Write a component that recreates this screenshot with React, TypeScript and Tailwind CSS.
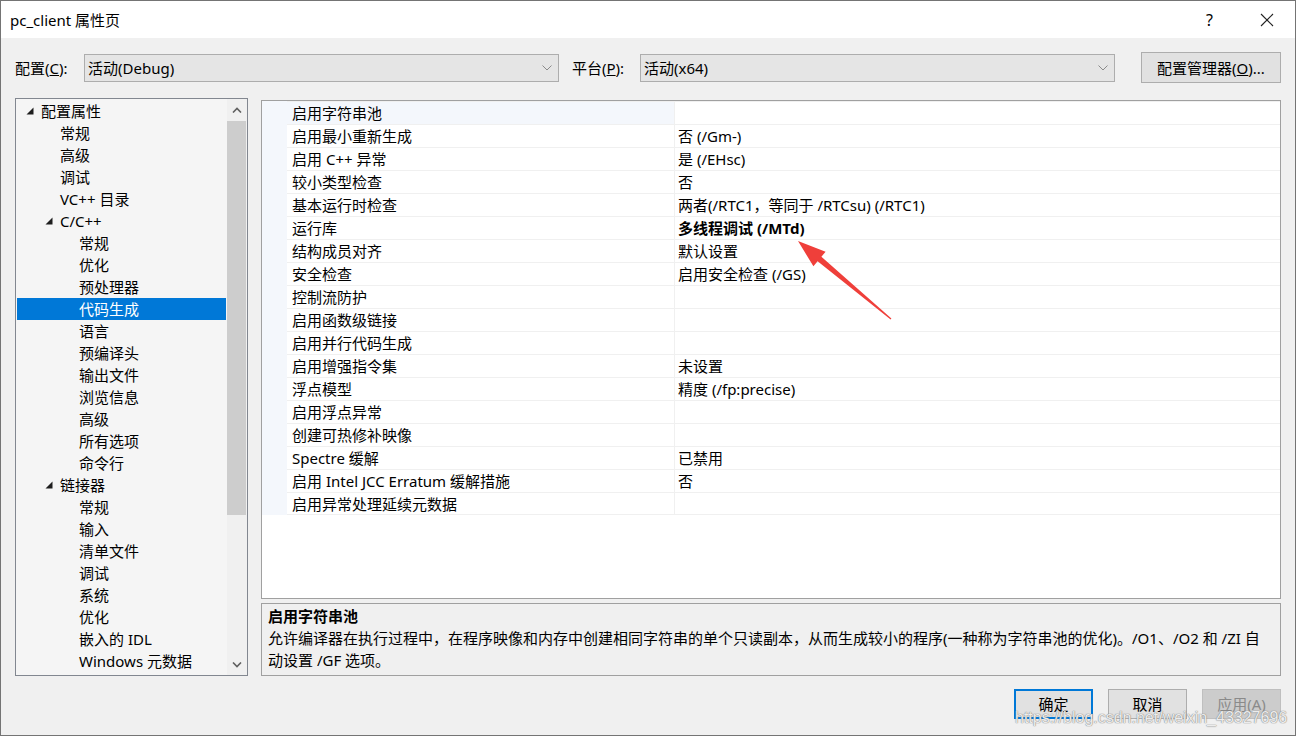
const FONT = { fontFamily: '"Noto Sans", "Noto Sans CJK SC", sans-serif' };

type TreeItem = { label: string; level: number; open?: boolean; selected?: boolean };

const tree: TreeItem[] = [
  { label: "配置属性", level: 0, open: true },
  { label: "常规", level: 1 },
  { label: "高级", level: 1 },
  { label: "调试", level: 1 },
  { label: "VC++ 目录", level: 1 },
  { label: "C/C++", level: 1, open: true },
  { label: "常规", level: 2 },
  { label: "优化", level: 2 },
  { label: "预处理器", level: 2 },
  { label: "代码生成", level: 2, selected: true },
  { label: "语言", level: 2 },
  { label: "预编译头", level: 2 },
  { label: "输出文件", level: 2 },
  { label: "浏览信息", level: 2 },
  { label: "高级", level: 2 },
  { label: "所有选项", level: 2 },
  { label: "命令行", level: 2 },
  { label: "链接器", level: 1, open: true },
  { label: "常规", level: 2 },
  { label: "输入", level: 2 },
  { label: "清单文件", level: 2 },
  { label: "调试", level: 2 },
  { label: "系统", level: 2 },
  { label: "优化", level: 2 },
  { label: "嵌入的 IDL", level: 2 },
  { label: "Windows 元数据", level: 2 },
];

const props: { name: string; value: string; bold?: boolean }[] = [
  { name: "启用字符串池", value: "" },
  { name: "启用最小重新生成", value: "否 (/Gm-)" },
  { name: "启用 C++ 异常", value: "是 (/EHsc)" },
  { name: "较小类型检查", value: "否" },
  { name: "基本运行时检查", value: "两者(/RTC1，等同于 /RTCsu) (/RTC1)" },
  { name: "运行库", value: "多线程调试 (/MTd)", bold: true },
  { name: "结构成员对齐", value: "默认设置" },
  { name: "安全检查", value: "启用安全检查 (/GS)" },
  { name: "控制流防护", value: "" },
  { name: "启用函数级链接", value: "" },
  { name: "启用并行代码生成", value: "" },
  { name: "启用增强指令集", value: "未设置" },
  { name: "浮点模型", value: "精度 (/fp:precise)" },
  { name: "启用浮点异常", value: "" },
  { name: "创建可热修补映像", value: "" },
  { name: "Spectre 缓解", value: "已禁用" },
  { name: "启用 Intel JCC Erratum 缓解措施", value: "否" },
  { name: "启用异常处理延续元数据", value: "" },
];

const indent = ["pl-[9px]", "pl-[28px]", "pl-[47px]"];

function Chevron({ up }: { up?: boolean }) {
  return (
    <svg width="10" height="6" viewBox="0 0 10 6">
      <polyline
        points={up ? "1,5.5 5,1.5 9,5.5" : "1,0.5 5,4.5 9,0.5"}
        fill="none"
        stroke="#606060"
        strokeWidth="1.6"
      />
    </svg>
  );
}

function Combo({ text }: { text: string }) {
  return (
    <div className="flex h-[28px] w-[475px] items-center justify-between border border-[#adadad] bg-[#e5e5e5] pl-[3px] pr-[6px]">
      <span>{text}</span>
      <svg width="10" height="6" viewBox="0 0 10 6">
        <polyline points="0.5,0.5 5,5 9.5,0.5" fill="none" stroke="#8a8a8a" strokeWidth="1" />
      </svg>
    </div>
  );
}

export default function App() {
  return (
    <div
      className="relative box-border flex h-[736px] w-[1296px] flex-col overflow-hidden border border-[#747474] bg-[#f0f0f0] text-[15px] leading-[22px] text-black"
      style={FONT}
    >
      {/* Title bar */}
      <div className="flex h-[37px] shrink-0 items-center bg-white pl-[9px]">
        <span className="flex-1">pc_client 属性页</span>
        <span className="mr-[47px] text-[16px]">?</span>
        <svg width="14" height="14" viewBox="0 0 14 14" className="mr-[21px]">
          <line x1="1" y1="1" x2="13" y2="13" stroke="#222" strokeWidth="1.1" />
          <line x1="13" y1="1" x2="1" y2="13" stroke="#222" strokeWidth="1.1" />
        </svg>
      </div>

      {/* Configuration row */}
      <div className="mt-[14px] flex h-[31px] shrink-0 items-center pl-[14px]">
        <span className="w-[69px]">
          配置(<span className="underline">C</span>):
        </span>
        <Combo text="活动(Debug)" />
        <span className="ml-[13px] w-[68px]">
          平台(<span className="underline">P</span>):
        </span>
        <Combo text="活动(x64)" />
        <button className="ml-[26px] flex h-[31px] w-[140px] items-center justify-center border border-[#adadad] bg-[#e1e1e1]">
          配置管理器(<span className="underline">O</span>)...
        </button>
      </div>

      {/* Main area */}
      <div className="mt-[15px] flex h-[578px] shrink-0 pl-[14px]">
        {/* Tree */}
        <div className="flex h-[578px] w-[233px] border border-[#828790] bg-[#f5f5f5]">
          <div className="flex-1 overflow-hidden pt-px">
            {tree.map((t, i) => (
              <div
                key={i}
                className={`mx-px flex h-[22px] items-center whitespace-nowrap ${indent[t.level]} ${
                  t.selected ? "bg-[#0078d7] text-white" : ""
                }`}
              >
                <span className="flex w-[15px] shrink-0 items-center">
                  {t.open && (
                    <svg width="8" height="8" viewBox="0 0 8 8">
                      <polygon points="7.5,0.5 7.5,7.5 0.5,7.5" fill="#1e1e1e" />
                    </svg>
                  )}
                </span>
                <span>{t.label}</span>
              </div>
            ))}
          </div>
          <div className="flex w-[20px] flex-col bg-[#f0f0f0]">
            <div className="flex h-[21px] items-center justify-center">
              <Chevron up />
            </div>
            <div className="mt-px h-[394px] w-[19px] bg-[#cdcdcd]" />
            <div className="flex-1" />
            <div className="flex h-[21px] items-center justify-center">
              <Chevron />
            </div>
          </div>
        </div>

        {/* Right column */}
        <div className="ml-[13px] flex w-[1020px] flex-col">
          <div className="mt-[2px] h-[499px] border border-[#a0a0a0] bg-white">
            {props.map((p, i) => (
              <div key={i} className="flex h-[23px]">
                <div className="w-[25px] shrink-0 bg-[#f4f7fc]" />
                <div
                  className={`flex w-[387px] shrink-0 items-center border-t border-[#f0f0f0] pl-[5px] whitespace-nowrap ${
                    i === 0 ? "bg-[#f4f7fc]" : ""
                  } ${i === props.length - 1 ? "border-b" : ""}`}
                >
                  {p.name}
                </div>
                <div
                  className={`flex flex-1 items-center border-t border-l border-[#f0f0f0] pl-[3px] whitespace-nowrap ${
                    p.bold ? "font-bold" : ""
                  } ${i === props.length - 1 ? "border-b" : ""}`}
                >
                  {p.value}
                </div>
              </div>
            ))}
          </div>

          <div className="mt-[4px] h-[73px] border border-[#a0a0a0] bg-[#f0f0f0] pl-[6px] pt-px">
            <div className="font-bold">启用字符串池</div>
            <div className="whitespace-nowrap">
              允许编译器在执行过程中，在程序映像和内存中创建相同字符串的单个只读副本，从而生成较小的程序(一种称为字符串池的优化)。/O1、/O2 和 /ZI 自
            </div>
            <div className="whitespace-nowrap">动设置 /GF 选项。</div>
          </div>
        </div>
      </div>

      {/* Buttons */}
      <div className="mt-[13px] flex h-[30px] shrink-0 justify-end gap-[15px] pr-[14px]">
        <button className="flex w-[79px] items-center justify-center border-2 border-[#0078d7] bg-[#e1e1e1]">
          确定
        </button>
        <button className="flex w-[79px] items-center justify-center border border-[#adadad] bg-[#e1e1e1]">
          取消
        </button>
        <button className="flex w-[79px] items-center justify-center border border-[#bfbfbf] bg-[#cccccc] text-[#8a8a8a]">
          应用(A)
        </button>
      </div>

      {/* Red annotation arrow */}
      <svg
        className="pointer-events-none absolute left-0 top-0"
        width="1296"
        height="736"
        viewBox="0 0 1296 736"
      >
        <polygon
          points="797,240 824.6,250.7 820.4,255.7 890.4,317.5 889.6,318.5 816.6,260.3 812.4,265.3"
          fill="#ef3f3a"
        />
      </svg>

      {/* Watermark */}
      <div
        className="pointer-events-none absolute left-[1014px] top-[707px] whitespace-nowrap text-[16px] leading-[20px] text-white/85 [text-shadow:0_0_1px_#7d7d7d,0_0_1px_#7d7d7d]"
        style={{ fontFamily: '"Liberation Sans", Arial, sans-serif' }}
      >
        https://blog.csdn.net/weixin_43327696
      </div>
    </div>
  );
}
